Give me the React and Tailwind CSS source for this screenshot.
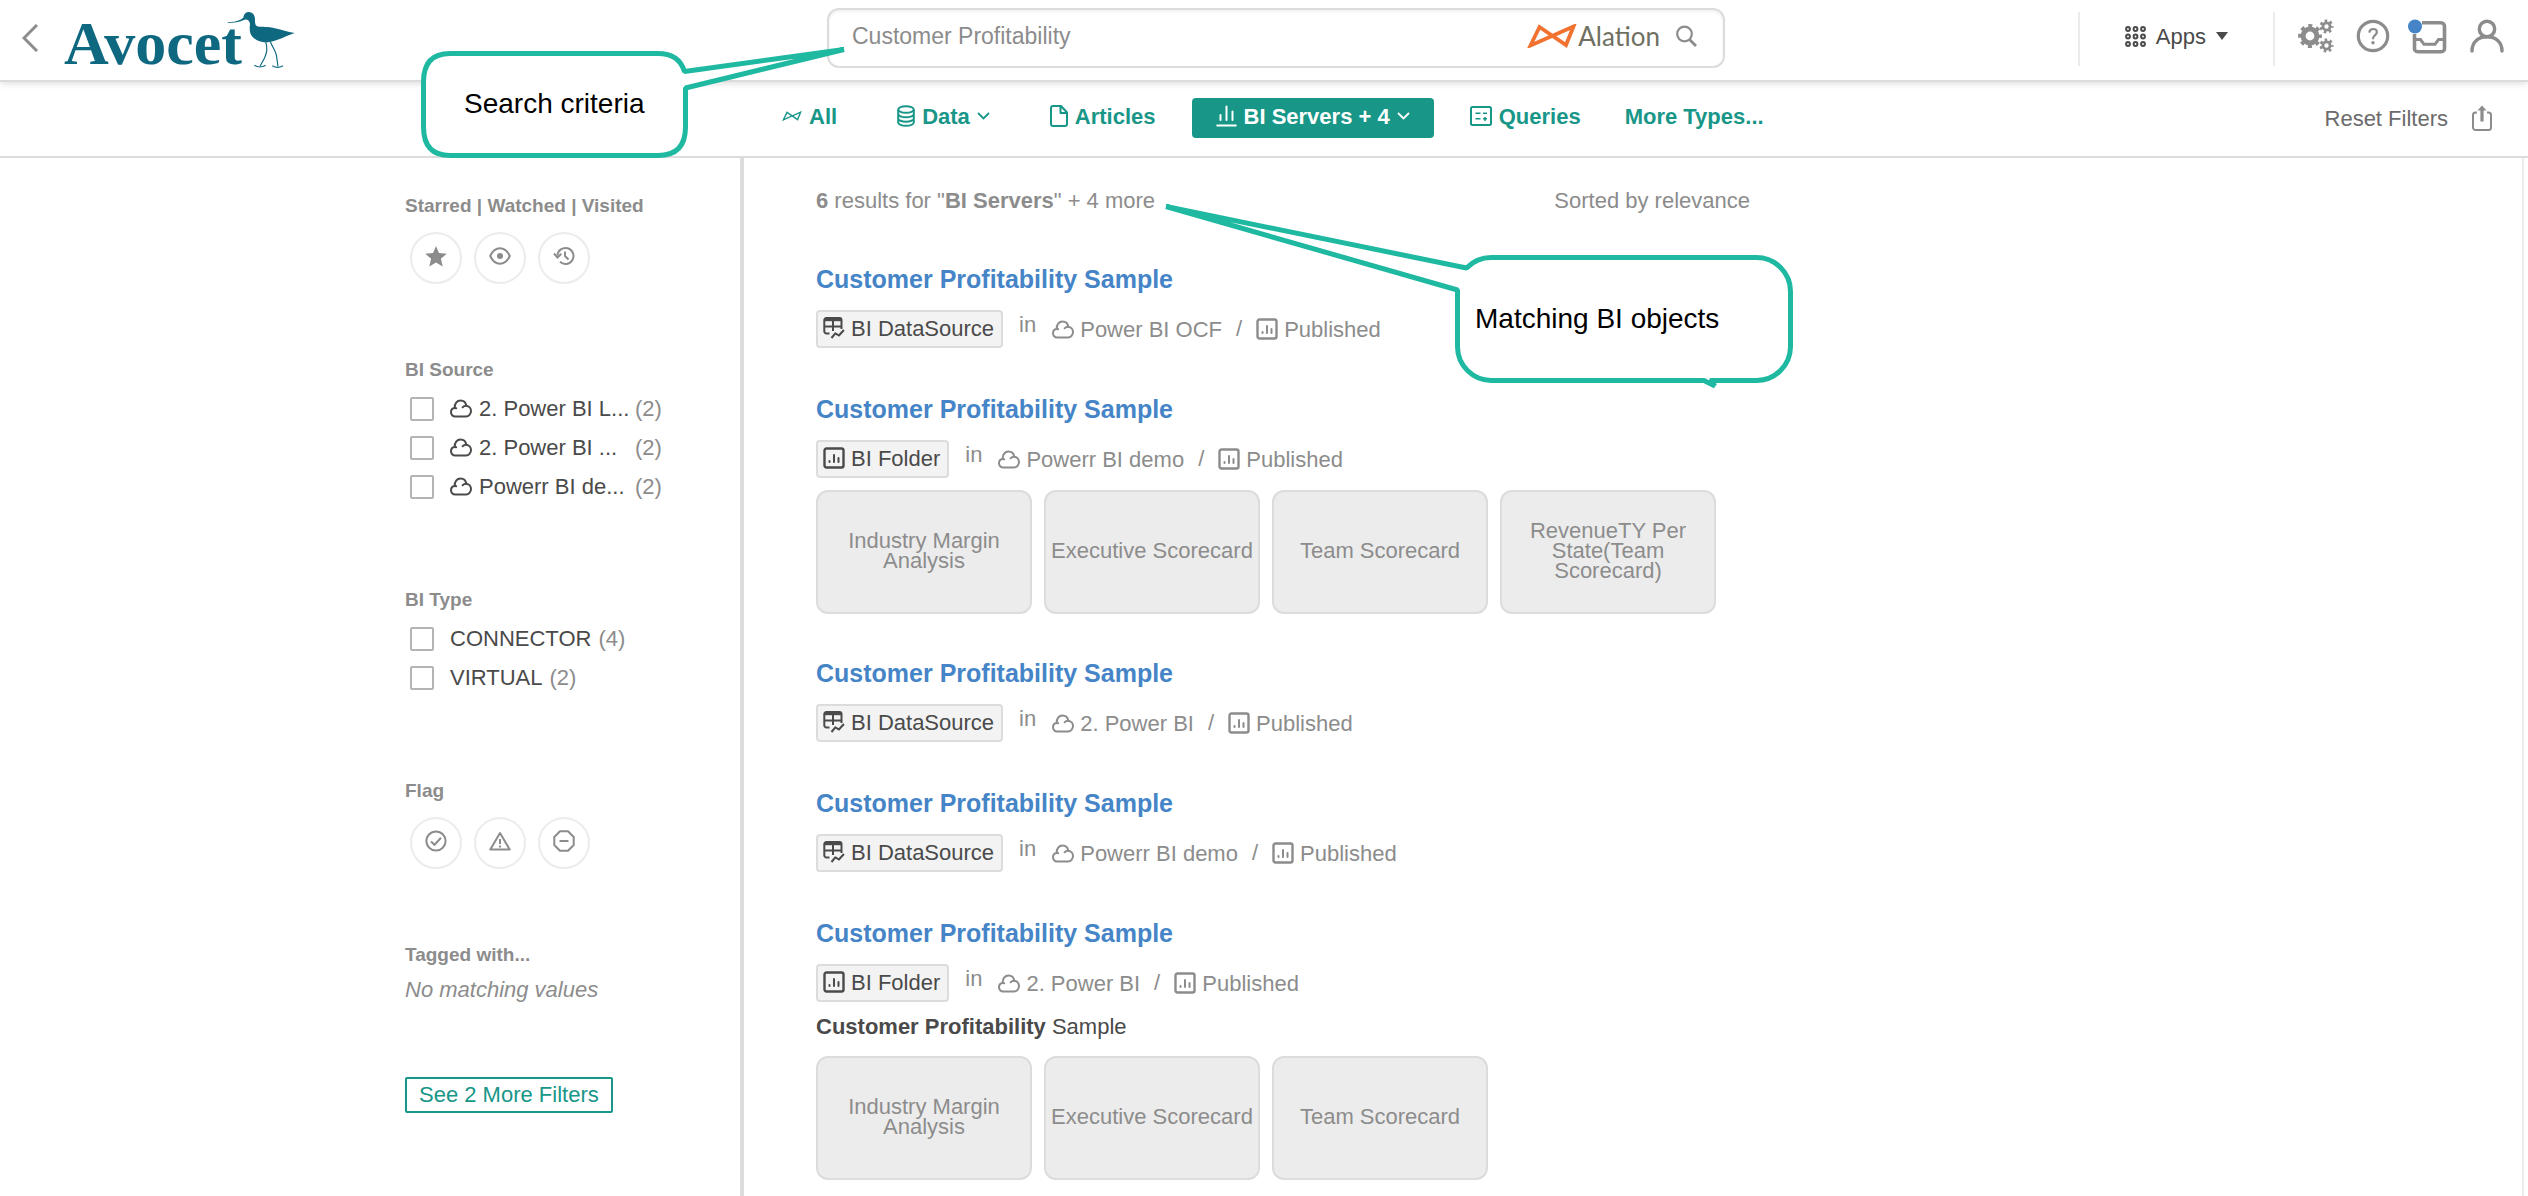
import React from "react";

/* ---------- icons ---------- */

function CloudIcon({ className = "" }) {
  return (
    <svg viewBox="0 0 22 19" fill="none" stroke="currentColor" strokeWidth="2" strokeLinecap="round" strokeLinejoin="round" className={"h-[19px] w-[22px] shrink-0 " + className} aria-hidden="true">
      <path d="M5.200 17.500C2.700 17.500 1 15.700 1 13.300C1 10.900 2.600 9.200 4.700 9C4.400 4.600 7 1.500 10.500 1.500C13.500 1.500 15.800 3.500 16.300 6.700C19 7 21 9.300 21 12C21 15 18.800 17.500 16 17.500z" />
      <path d="M12.600 8.300C13.600 7.100 14.900 6.600 16.300 6.700" />
      <path d="M4.700 9L6.200 9.200" />
    </svg>
  );
}

function ChartBoxIcon({ className = "" }) {
  return (
    <svg viewBox="0 0 22 22" fill="none" stroke="currentColor" strokeWidth="2" strokeLinecap="round" className={"size-[22px] shrink-0 " + className} aria-hidden="true">
      <rect x="1.500" y="1.500" width="19" height="19" rx="2" strokeWidth="2.400" />
      <path d="M6.500 14v1M11 8v7M15.500 11v4" />
    </svg>
  );
}

function DataSourceIcon() {
  return (
    <svg viewBox="0 0 22 22" fill="none" stroke="currentColor" strokeWidth="2" className="size-[22px] shrink-0" aria-hidden="true">
      <path d="M6.500 16.500H3.500a2.200 2.200 0 0 1-2.200-2.200V3a2 2 0 0 1 2-2h13.200a2 2 0 0 1 2 2v9" />
      <path d="M2 2.700h16" strokeWidth="3" />
      <path d="M1.300 9.500h17M10 3v11" />
      <path d="M8.500 21l3.800-4.700 3.600 2.200 5-5.500" strokeLinejoin="round" />
    </svg>
  );
}

function Gear({ cx, cy, body, ring, outer, teeth }) {
  const r = (body + outer) / 2;
  const step = (2 * Math.PI * r) / (teeth * 2);
  return (
    <g fill="none" stroke="currentColor">
      <circle cx={cx} cy={cy} r={body - ring / 2} strokeWidth={ring} />
      <circle cx={cx} cy={cy} r={r} strokeWidth={outer - body + 1} strokeDasharray={`${step} ${step}`} strokeDashoffset={step / 2} />
    </g>
  );
}

function GearsIcon() {
  return (
    <svg viewBox="0 0 36 34" className="h-[34px] w-9" aria-hidden="true">
      <Gear cx={12} cy={17} body={9.4} ring={5} outer={11.4} teeth={8} />
      <Gear cx={28.5} cy={7.5} body={5} ring={2.8} outer={6.5} teeth={7} />
      <Gear cx={28.5} cy={26.5} body={5} ring={2.8} outer={6.5} teeth={7} />
    </svg>
  );
}

function HelpIcon() {
  return (
    <svg viewBox="0 0 34 34" fill="none" stroke="currentColor" className="size-[34px]" aria-hidden="true">
      <circle cx="17" cy="17" r="14.700" strokeWidth="3.200" />
      <path d="M13.300 13.600c.200-2.300 1.700-3.600 3.800-3.600 2.200 0 3.800 1.300 3.800 3.300 0 2.600-3.900 3-3.900 6.200v.8" strokeWidth="2.200" />
      <circle cx="17" cy="23.800" r="1.700" fill="currentColor" stroke="none" />
    </svg>
  );
}

function InboxIcon() {
  return (
    <svg viewBox="0 0 40 36" fill="none" className="h-9 w-10" aria-hidden="true">
      <path d="M14 4.700h19a3.500 3.500 0 0 1 3.500 3.500v22.500a3 3 0 0 1-3 3h-24a3 3 0 0 1-3-3V16" stroke="currentColor" strokeWidth="3.600" />
      <path d="M6.500 21.500h6l3.500 4.800h11l3.500-4.800h6" stroke="currentColor" strokeWidth="3" />
      <circle cx="7" cy="8.500" r="7" fill="#4585c7" />
    </svg>
  );
}

function UserIcon() {
  return (
    <svg viewBox="0 0 34 34" fill="none" stroke="currentColor" strokeWidth="3.400" strokeLinecap="round" className="size-[34px]" aria-hidden="true">
      <circle cx="17" cy="10" r="7.700" />
      <path d="M2 32c0-9 6.500-14.300 15-14.300S32 23 32 32" />
    </svg>
  );
}

function DotsIcon() {
  const c = [3, 10.5, 18];
  return (
    <svg viewBox="0 0 21 21" fill="none" stroke="currentColor" strokeWidth="2" className="size-[21px]" aria-hidden="true">
      {c.map((y) => c.map((x) => <circle key={x + "-" + y} cx={x} cy={y} r="1.900" />))}
    </svg>
  );
}

function ShareIcon() {
  return (
    <svg viewBox="0 0 20 26" fill="none" stroke="currentColor" strokeWidth="2" className="h-[26px] w-5" aria-hidden="true">
      <path d="M5 7.500H3.500A2.500 2.500 0 0 0 1 10v12.500A2.500 2.500 0 0 0 3.500 25h13a2.500 2.500 0 0 0 2.500-2.500V10a2.500 2.500 0 0 0-2.500-2.500H15" />
      <path d="M10 16.500V4" strokeWidth="3.200" />
      <path d="M5.500 5.500L10 .5l4.500 5z" fill="currentColor" stroke="none" />
    </svg>
  );
}

function BowtieIcon({ className, strokeWidth }) {
  return (
    <svg viewBox="0 0 50 24" fill="none" stroke="currentColor" strokeWidth={strokeWidth} strokeLinejoin="miter" className={className} aria-hidden="true">
      <path d="M3.500 21.500L12.500 3 39 21 46.500 2.500z" />
    </svg>
  );
}

function ChevronDown() {
  return (
    <svg viewBox="0 0 13 8" fill="none" stroke="currentColor" strokeWidth="1.800" className="h-2 w-[13px]" aria-hidden="true">
      <path d="M1 1l5.500 5.500L12 1" />
    </svg>
  );
}

function DatabaseIcon() {
  return (
    <svg viewBox="0 0 18 22" fill="none" stroke="currentColor" strokeWidth="2" className="h-[22px] w-[18px]" aria-hidden="true">
      <ellipse cx="9" cy="4.500" rx="7.800" ry="3.300" />
      <path d="M1.200 4.500v13c0 1.900 3.500 3.300 7.800 3.300s7.800-1.400 7.800-3.300v-13M1.200 9c0 1.900 3.500 3.300 7.800 3.300s7.800-1.400 7.800-3.300M1.200 13.400c0 1.900 3.500 3.300 7.800 3.300s7.800-1.400 7.800-3.300" />
    </svg>
  );
}

function FileIcon() {
  return (
    <svg viewBox="0 0 18 22" fill="none" stroke="currentColor" strokeWidth="2" strokeLinejoin="round" className="h-[22px] w-[18px]" aria-hidden="true">
      <path d="M11 1H3a2 2 0 0 0-2 2v16a2 2 0 0 0 2 2h12a2 2 0 0 0 2-2V7.500zM10.500 1v7H17" />
    </svg>
  );
}

function BarsIcon() {
  return (
    <svg viewBox="0 0 21 22" fill="none" stroke="currentColor" strokeWidth="2" strokeLinecap="round" className="h-[22px] w-[21px]" aria-hidden="true">
      <path d="M4.500 10v5M10.500 1.500V15M16.500 6.500V15M1.200 20.500h18.600" />
    </svg>
  );
}

function QueryIcon() {
  return (
    <svg viewBox="0 0 22 20" fill="none" stroke="currentColor" strokeWidth="2" className="h-5 w-[22px]" aria-hidden="true">
      <rect x="1" y="1" width="20" height="18" rx="1.500" />
      <path d="M5.500 7.200h5M5.500 12.800h5M13 7.200h4M13 12.800h4M15 11v4" strokeWidth="1.600" />
    </svg>
  );
}

function StarIcon() {
  return (
    <svg viewBox="0 0 22 21" fill="currentColor" className="h-[21px] w-[22px]" aria-hidden="true">
      <path d="M11 0l3 7 7.800.700-5.900 5 1.800 7.800L11 16.400l-6.700 4.100 1.800-7.800-5.900-5L8 7z" />
    </svg>
  );
}

function EyeIcon() {
  return (
    <svg viewBox="0 0 22 20" fill="none" stroke="currentColor" strokeWidth="2" className="h-5 w-[22px]" aria-hidden="true">
      <path d="M1.200 10C3.500 5 7 2.300 11 2.300S18.500 5 20.800 10C18.500 15 15 17.700 11 17.700S3.500 15 1.200 10z" />
      <circle cx="11" cy="10" r="3" fill="currentColor" stroke="none" />
    </svg>
  );
}

function HistoryIcon() {
  return (
    <svg viewBox="0 0 22 20" fill="none" stroke="currentColor" strokeWidth="2" className="h-5 w-[22px]" aria-hidden="true">
      <path d="M4.500 9.500A8 8 0 1 1 7 15.800" />
      <path d="M1 7.500l3.500 4 3.800-3.700M12 5.500v4.500l3.500 3.500" />
    </svg>
  );
}

function CheckIcon() {
  return (
    <svg viewBox="0 0 22 22" fill="none" stroke="currentColor" strokeWidth="2" className="size-[22px]" aria-hidden="true">
      <circle cx="11" cy="11" r="9.600" />
      <path d="M6 11.500l3.500 3.300 6.500-7" />
    </svg>
  );
}

function WarnIcon() {
  return (
    <svg viewBox="0 0 22 20" fill="none" stroke="currentColor" strokeWidth="2" strokeLinejoin="round" className="h-5 w-[22px]" aria-hidden="true">
      <path d="M11 2L20.700 18.500H1.300zM11 8v5M11 14.500v2" />
    </svg>
  );
}

function StopIcon() {
  return (
    <svg viewBox="0 0 22 22" fill="none" stroke="currentColor" strokeWidth="2" strokeLinejoin="round" className="size-[22px]" aria-hidden="true">
      <path d="M7 1.300h8L20.700 7v8L15 20.700H7L1.300 15V7zM6.500 11h9" />
    </svg>
  );
}

function BirdIcon() {
  return (
    <svg viewBox="650 30 210 174" className="-ml-4 mt-0.5 h-[58px] w-[70px]" aria-hidden="true">
      <path
        fill="#0d6880"
        d="M655 65C680 66 694 61 706 56C714 54 720 59 722 68C720 84 721 100 730 108C742 120 758 124 775 124C800 121 825 108 840 102L856 96C835 92 812 84 790 80C768 76 752 79 742 75C735 70 738 55 736 47C733 37 725 33 717 33C707 34 704 41 702 50C692 58 676 65 655 63z"
      />
      <g fill="none" stroke="#0d6880" strokeWidth="3.500">
        <path d="M769 122C776 145 772 155 766 170L752 196M783 122C790 140 801 152 802 168L806 196" />
        <path d="M735 193Q752 203 769 193M789 194Q805 204 821 194" />
      </g>
    </svg>
  );
}

/* ---------- header ---------- */

function Header() {
  return (
    <header className="relative z-10 grid h-[82px] grid-cols-[827fr_898fr_803fr] border-b-2 border-[#dcdcdc] bg-white shadow-[0_2px_6px_rgba(0,0,0,0.12)]">
      <div className="flex items-start pt-[9px] pl-[22px]">
        <button type="button" aria-label="Back" className="mt-[15px] text-[#8c8c8c]">
          <svg viewBox="0 0 16 28" fill="none" stroke="currentColor" strokeWidth="3" className="h-7 w-4" aria-hidden="true">
            <path d="M15 1L2 14l13 13" />
          </svg>
        </button>
        <a href="#home" className="ml-[26px] flex items-start">
          <span className="mt-1 font-['Liberation_Serif',serif] text-[62px] leading-[60px] font-bold text-[#0d6880]">Avocet</span>
          <BirdIcon />
        </a>
      </div>

      <form className="mt-2 flex h-[60px] items-center rounded-xl border-2 border-[#dcdcdc] pr-[26px] pb-1 pl-[23px] shadow-[inset_0_2px_3px_rgba(0,0,0,0.06)]" onSubmit={(e) => e.preventDefault()}>
        <input type="text" aria-label="Search" defaultValue="Customer Profitability" className="min-w-0 flex-1 bg-transparent text-[23px] text-[#8c8c8c] outline-none" />
        <BowtieIcon strokeWidth={3.8} className="h-6 w-[50px] text-[#f27330]" />
        <span className="ml-px font-[Lato,sans-serif] text-[26px] leading-[30px] text-[#6f6f62]">Alation</span>
        <button type="submit" aria-label="Search" className="ml-4 text-[#8c8c8c]">
          <svg viewBox="0 0 21 22" fill="none" stroke="currentColor" strokeWidth="2.200" className="h-[22px] w-[21px]" aria-hidden="true">
            <circle cx="8.500" cy="9" r="7.300" />
            <path d="M13.500 14.500l6.500 6.500" strokeWidth="2.800" />
          </svg>
        </button>
      </form>

      <div className="flex h-[72px] items-center justify-end pr-6 text-[#8c8c8c]">
        <span className="mt-[6px] h-[54px] w-0.5 bg-[#ebebeb]" />
        <button type="button" className="mx-[45px] flex items-center text-[22px] text-[#4a4a4a]">
          <DotsIcon />
          <span className="ml-[10px]">Apps</span>
          <svg viewBox="0 0 12 8" className="ml-[10px] h-2 w-3" aria-hidden="true">
            <path d="M0 0h12L6 8z" fill="currentColor" />
          </svg>
        </button>
        <span className="mt-[6px] mr-[23px] h-[54px] w-0.5 bg-[#ebebeb]" />
        <button type="button" aria-label="Settings"><GearsIcon /></button>
        <button type="button" aria-label="Help" className="ml-[22px]"><HelpIcon /></button>
        <button type="button" aria-label="Inbox" className="ml-[18px]"><InboxIcon /></button>
        <button type="button" aria-label="Profile" className="ml-[22px]"><UserIcon /></button>
      </div>
    </header>
  );
}

const TAB = "flex h-10 items-center gap-[7px] rounded-sm px-6 pb-1";

function TypeBar() {
  return (
    <div className="grid grid-cols-[758fr_1770fr] border-b-2 border-[#dcdcdc] bg-white pt-4 pb-[18px] text-[22px]">
      <nav className="col-start-2 flex items-center gap-3 font-bold text-[#189688]">
        <button type="button" className={TAB}>
          <BowtieIcon strokeWidth={3.5} className="h-[10px] w-5" />
          <span>All</span>
        </button>
        <button type="button" className={TAB}>
          <DatabaseIcon />
          <span>Data</span>
          <ChevronDown />
        </button>
        <button type="button" className={TAB}>
          <FileIcon />
          <span>Articles</span>
        </button>
        <button type="button" className={TAB + " bg-[#189688] text-white"}>
          <BarsIcon />
          <span>BI Servers + 4</span>
          <ChevronDown />
        </button>
        <button type="button" className={TAB}>
          <QueryIcon />
          <span>Queries</span>
        </button>
        <button type="button" className="h-10 px-2 pb-1">More Types...</button>
        <span className="ml-auto flex items-center pr-9 font-normal text-[#6b6b6b]">
          <button type="button">Reset Filters</button>
          <button type="button" aria-label="Share" className="ml-6 text-[#8c8c8c]"><ShareIcon /></button>
        </span>
      </nav>
    </div>
  );
}

/* ---------- sidebar ---------- */

function FilterGroup({ title, children }) {
  return (
    <section>
      <h2 className="text-[19px] leading-6 font-bold text-[#8c8c8c]">{title}</h2>
      {children}
    </section>
  );
}

function RoundButtons({ items }) {
  return (
    <div className="mt-[14px] ml-[5px] flex gap-3">
      {items.map(([label, Icon]) => (
        <button key={label} type="button" aria-label={label} className="flex size-[52px] items-center justify-center rounded-full border-2 border-[#ececec] pb-1 text-[#8c8c8c]">
          <Icon />
        </button>
      ))}
    </div>
  );
}

function CheckRow({ label, count, cloud }) {
  return (
    <label className="flex h-[39px] items-center text-[22px] text-[#4a4a4a]">
      <input type="checkbox" className="size-6 appearance-none rounded-xs border-2 border-[#b4b4b4] bg-white checked:bg-[#189688]" />
      {cloud ? (
        <span className="ml-4 flex w-[185px] items-center gap-[7px]">
          <CloudIcon />
          <span className="truncate">{label}</span>
        </span>
      ) : (
        <span className="ml-4">{label}</span>
      )}
      <span className={cloud ? "text-[#8c8c8c]" : "ml-[7px] text-[#8c8c8c]"}>({count})</span>
    </label>
  );
}

function Sidebar() {
  return (
    <aside className="flex justify-end border-r-4 border-[#dcdcdc] pt-9">
      <div className="flex w-[335px] flex-col gap-[74px]">
        <FilterGroup title="Starred | Watched | Visited">
          <RoundButtons items={[["Starred", StarIcon], ["Watched", EyeIcon], ["Visited", HistoryIcon]]} />
        </FilterGroup>
        <FilterGroup title="BI Source">
          <div className="mt-[7px] ml-[5px] pb-2">
            <CheckRow cloud label="2. Power BI L..." count={2} />
            <CheckRow cloud label="2. Power BI ..." count={2} />
            <CheckRow cloud label="Powerr BI de..." count={2} />
          </div>
        </FilterGroup>
        <FilterGroup title="BI Type">
          <div className="mt-[7px] ml-[5px] pb-2">
            <CheckRow label="CONNECTOR" count={4} />
            <CheckRow label="VIRTUAL" count={2} />
          </div>
        </FilterGroup>
        <FilterGroup title="Flag">
          <RoundButtons items={[["Endorsed", CheckIcon], ["Warning", WarnIcon], ["Deprecated", StopIcon]]} />
        </FilterGroup>
        <FilterGroup title="Tagged with...">
          <p className="mt-[10px] text-[22px] leading-[26px] text-[#8c8c8c] italic">No matching values</p>
        </FilterGroup>
        <button type="button" className="self-start rounded-xs border-2 border-[#189688] px-3 text-[22px] leading-8 text-[#189688]">
          See 2 More Filters
        </button>
      </div>
    </aside>
  );
}

/* ---------- results ---------- */

const SHEETS = ["Industry Margin Analysis", "Executive Scorecard", "Team Scorecard"];

const RESULTS = [
  { kind: "BI DataSource", source: "Power BI OCF" },
  { kind: "BI Folder", source: "Powerr BI demo", cards: [...SHEETS, "RevenueTY Per State(Team Scorecard)"] },
  { kind: "BI DataSource", source: "2. Power BI" },
  { kind: "BI DataSource", source: "Powerr BI demo" },
  { kind: "BI Folder", source: "2. Power BI", excerpt: true, cards: SHEETS },
];

function Result({ kind, source, excerpt, cards }) {
  return (
    <article className={cards ? "pb-11 last:pb-3" : "pb-[46px]"}>
      <h3 className="text-[25px] leading-[30px] font-bold text-[#4585c7]">
        <a href="#result">Customer Profitability Sample</a>
      </h3>
      <div className="mt-4 flex items-start text-[22px] text-[#8c8c8c]">
        <span className="flex h-[38px] items-center gap-[6px] rounded-sm border-2 border-[#dcdcdc] bg-[#f3f3f3] pr-[7px] pb-0.5 pl-[5px] text-[#4a4a4a]">
          {kind === "BI Folder" ? <ChartBoxIcon /> : <DataSourceIcon />}
          {kind}
        </span>
        <span className="mx-4 leading-[30px]">in</span>
        <span className="flex h-[38px] items-center gap-[6px]">
          <CloudIcon />
          {source}
        </span>
        <span className="mx-[14px] leading-[38px]">/</span>
        <span className="flex h-[38px] items-center gap-[6px]">
          <ChartBoxIcon />
          Published
        </span>
      </div>
      {excerpt && (
        <p className="mt-3 text-[22px] leading-[26px] text-[#4a4a4a]">
          <b>Customer Profitability</b> Sample
        </p>
      )}
      {cards && (
        <ul className={excerpt ? "mt-4 flex gap-3" : "mt-3 flex gap-3"}>
          {cards.map((c) => (
            <li key={c} className="flex h-[124px] w-[216px] items-center justify-center rounded-xl border-2 border-[#dcdcdc] bg-[#ececec] pb-0.5 text-center text-[22px] leading-5 text-[#8c8c8c]">
              {c}
            </li>
          ))}
        </ul>
      )}
    </article>
  );
}

function Results() {
  return (
    <main className="mr-1 border-r-2 border-[#ebebeb] pt-[30px] pl-[72px]">
      <div className="flex max-w-[934px] justify-between text-[22px] leading-[26px] text-[#8c8c8c]">
        <p>
          <b>6</b> results for "<b>BI Servers</b>" + 4 more
        </p>
        <p>Sorted by relevance</p>
      </div>
      <div className="mt-[50px]">
        {RESULTS.map((r, i) => (
          <Result key={i} {...r} />
        ))}
      </div>
    </main>
  );
}

/* ---------- callouts ---------- */

function Callouts() {
  return (
    <>
      <div className="absolute top-[40px] left-[416px] z-20 h-[124px] w-[436px]">
        <svg viewBox="416 40 436 124" className="absolute inset-0 size-full" aria-hidden="true">
          <path
            d="M450 53.500H658C672 53.500 681 60 684.500 71.500L844 49.500L685.500 88V127Q685.500 155.500 658 155.500H450Q423.500 155.500 423.500 127V82Q423.500 53.500 450 53.500z"
            fill="#fff"
            stroke="#1fb9a1"
            strokeWidth="5"
            strokeLinejoin="bevel"
          />
        </svg>
        <p className="relative pt-12 pl-12 text-[28px] leading-8 text-black">Search criteria</p>
      </div>
      <div className="absolute top-[196px] left-[1160px] z-20 h-[196px] w-[640px]">
        <svg viewBox="1160 196 640 196" className="absolute inset-0 size-full" aria-hidden="true">
          <path
            d="M1491 257.500H1756A34 34 0 0 1 1790.500 292V347A34 34 0 0 1 1756 380.500H1710L1715 386L1704 380.500H1491A34 34 0 0 1 1457.500 347V290L1166 206.500L1466.500 268Q1477 257.500 1491 257.500z"
            fill="#fff"
            stroke="#1fb9a1"
            strokeWidth="5"
            strokeLinejoin="bevel"
          />
        </svg>
        <p className="relative pt-[107px] pl-[315px] text-[28px] leading-8 text-black">Matching BI objects</p>
      </div>
    </>
  );
}

export default function App() {
  return (
    <div className="relative flex min-h-screen flex-col bg-white font-['Liberation_Sans',Arial,sans-serif]">
      <Header />
      <TypeBar />
      <div className="grid flex-1 grid-cols-[744fr_1784fr]">
        <Sidebar />
        <Results />
      </div>
      <Callouts />
    </div>
  );
}
